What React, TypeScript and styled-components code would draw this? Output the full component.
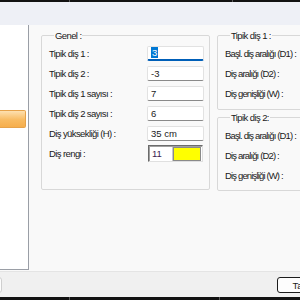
import React from "react";
import styled, { createGlobalStyle } from "styled-components";

type Field = {
  label: string;
  value: string;
  active?: boolean;
};

const Global = createGlobalStyle`
  html, body {
    margin: 0;
    padding: 0;
    background: #f9f9f9;
  }
`;

const Frame = styled.div`
  width: 300px;
  height: 300px;
  overflow: hidden;
  display: flex;
  flex-direction: column;
  background: #f9f9f9;
  font-family: "Liberation Sans", Arial, sans-serif;
  font-size: 9.5px;
  letter-spacing: -0.6px;
  color: #1a1a1a;
`;

const TaskStrip = styled.div<{ $h: number }>`
  height: ${(p) => p.$h}px;
  flex: none;
  background: #121212;
  display: flex;
`;

const StripMark = styled.div<{ $left: number }>`
  width: 1px;
  margin-left: ${(p) => p.$left}px;
  background: #5a5a5a;
`;

const TitleBand = styled.div`
  height: 23px;
  flex: none;
  background: #eef0f6;
`;

const Body = styled.div`
  flex: 1;
  display: flex;
  min-height: 0;
`;

const SideList = styled.div`
  width: 29px;
  flex: none;
  margin-bottom: 1px;
  background: #ffffff;
  border-right: 1px solid #9a9ea6;
  border-bottom: 1px solid #9a9ea6;
  padding-top: 85px;
  box-sizing: border-box;
`;

const SideItem = styled.div`
  width: 26px;
  height: 18px;
  box-sizing: border-box;
  border: 1px solid #e6a24a;
  border-left: none;
  border-radius: 0 2px 2px 0;
  background: linear-gradient(#fde0b0, #f8bb62 55%, #f6ae4c);
`;

const Content = styled.div`
  flex: 1;
  display: flex;
  gap: 7px;
  padding: 3px 0 0 12px;
  min-width: 0;
`;

const Column = styled.div<{ $w: number; $tight?: boolean }>`
  width: ${(p) => p.$w}px;
  flex: none;
  display: flex;
  flex-direction: column;
  letter-spacing: ${(p) => (p.$tight ? "-0.85px" : "inherit")};
`;

const Group = styled.fieldset<{ $bottom: number }>`
  margin: 0;
  padding: 0 5px ${(p) => p.$bottom}px 7px;
  border: 1px solid #d8d8d8;
  border-radius: 2px;
  min-width: 0;
`;

const Legend = styled.legend`
  padding: 0 1px;
  margin-left: 5px;
  line-height: 15px;
  letter-spacing: -0.6px;
`;

const Row = styled.div`
  height: 20px;
  display: flex;
  align-items: center;
  justify-content: space-between;
  white-space: nowrap;
`;

const TextBox = styled.div<{ $active?: boolean }>`
  width: 57px;
  height: 15px;
  box-sizing: border-box;
  background: #ffffff;
  border: 1px solid #e2e2e2;
  border-bottom: ${(p) => (p.$active ? "2px solid #005fb8" : "1px solid #8a8a8a")};
  border-radius: 2px;
  padding: 0 3px;
  display: flex;
  align-items: center;
  letter-spacing: 0;
`;

const Selected = styled.span`
  background: #0078d4;
  color: #ffffff;
  padding: 0 1px;
`;

const ColorBox = styled.div`
  width: 55px;
  height: 17px;
  margin-right: 1px;
  box-sizing: border-box;
  display: flex;
  background: #ffffff;
  border: 1px solid;
  border-color: #6b6b6b #e0e0e0 #e0e0e0 #6b6b6b;
  box-shadow: inset 1px 1px 0 #a0a0a0;
  padding: 1px 1px 0 1px;
  letter-spacing: 0;
`;

const ColorCode = styled.div`
  width: 20px;
  padding-left: 2px;
  line-height: 13px;
  color: #3b2450;
  border-right: 1px solid #c8c8c8;
`;

const Swatch = styled.div<{ $color: string }>`
  flex: 1;
  background: ${(p) => p.$color};
  border: 1px solid #8a8a8a;
`;

const Footer = styled.div`
  height: 26px;
  flex: none;
  box-sizing: border-box;
  background: #f0f0f0;
  border-top: 1px solid #e4e4e4;
  display: flex;
  align-items: flex-start;
  padding-top: 5px;
`;

const Button = styled.button<{ $primary?: boolean }>`
  width: 62px;
  height: 16px;
  flex: none;
  padding: 0;
  font: inherit;
  letter-spacing: 0;
  color: #1a1a1a;
  background: #fdfdfd;
  border: 1px solid ${(p) => (p.$primary ? "#1c1c1c" : "#cfcfcf")};
  border-radius: 3px;
`;

const generalFields: Field[] = [
  { label: "Tipik diş 1 :", value: "3", active: true },
  { label: "Tipik diş 2 :", value: "-3" },
  { label: "Tipik diş 1 sayısı :", value: "7" },
  { label: "Tipik diş 2 sayısı :", value: "6" },
  { label: "Diş yüksekliği (H) :", value: "35 cm" },
];

const toothLabels = ["Başl. diş aralığı (D1) :", "Diş aralığı (D2) :", "Diş genişliği (W) :"];

const App: React.FC = () => {
  return (
    <>
      <Global />
      <Frame>
        <TaskStrip $h={2}>
          <StripMark $left={69} />
          <StripMark $left={162} />
        </TaskStrip>
        <TitleBand />
        <Body>
          <SideList>
            <SideItem />
          </SideList>
          <Content>
            <Column $w={169}>
              <Group $bottom={26}>
                <Legend>Genel :</Legend>
                {generalFields.map((f) => (
                  <Row key={f.label}>
                    <span>{f.label}</span>
                    <TextBox $active={f.active}>
                      {f.active ? <Selected>{f.value}</Selected> : f.value}
                    </TextBox>
                  </Row>
                ))}
                <Row>
                  <span>Diş rengi :</span>
                  <ColorBox>
                    <ColorCode>11</ColorCode>
                    <Swatch $color="#ffff00" />
                  </ColorBox>
                </Row>
              </Group>
            </Column>
            <Column $w={120} $tight>
              <Group $bottom={6}>
                <Legend>Tipik diş 1 :</Legend>
                {toothLabels.map((l) => (
                  <Row key={l}>
                    <span>{l}</span>
                  </Row>
                ))}
              </Group>
              <Group $bottom={5}>
                <Legend>Tipik diş 2:</Legend>
                {toothLabels.map((l) => (
                  <Row key={l}>
                    <span>{l}</span>
                  </Row>
                ))}
              </Group>
            </Column>
          </Content>
        </Body>
        <Footer>
          <Button style={{ marginLeft: -60 }} />
          <Button $primary style={{ marginLeft: "auto", marginRight: -39 }}>
            Tamam
          </Button>
        </Footer>
        <TaskStrip $h={3}>
          <StripMark $left={69} />
          <StripMark $left={149} />
        </TaskStrip>
      </Frame>
    </>
  );
};

export default App;
